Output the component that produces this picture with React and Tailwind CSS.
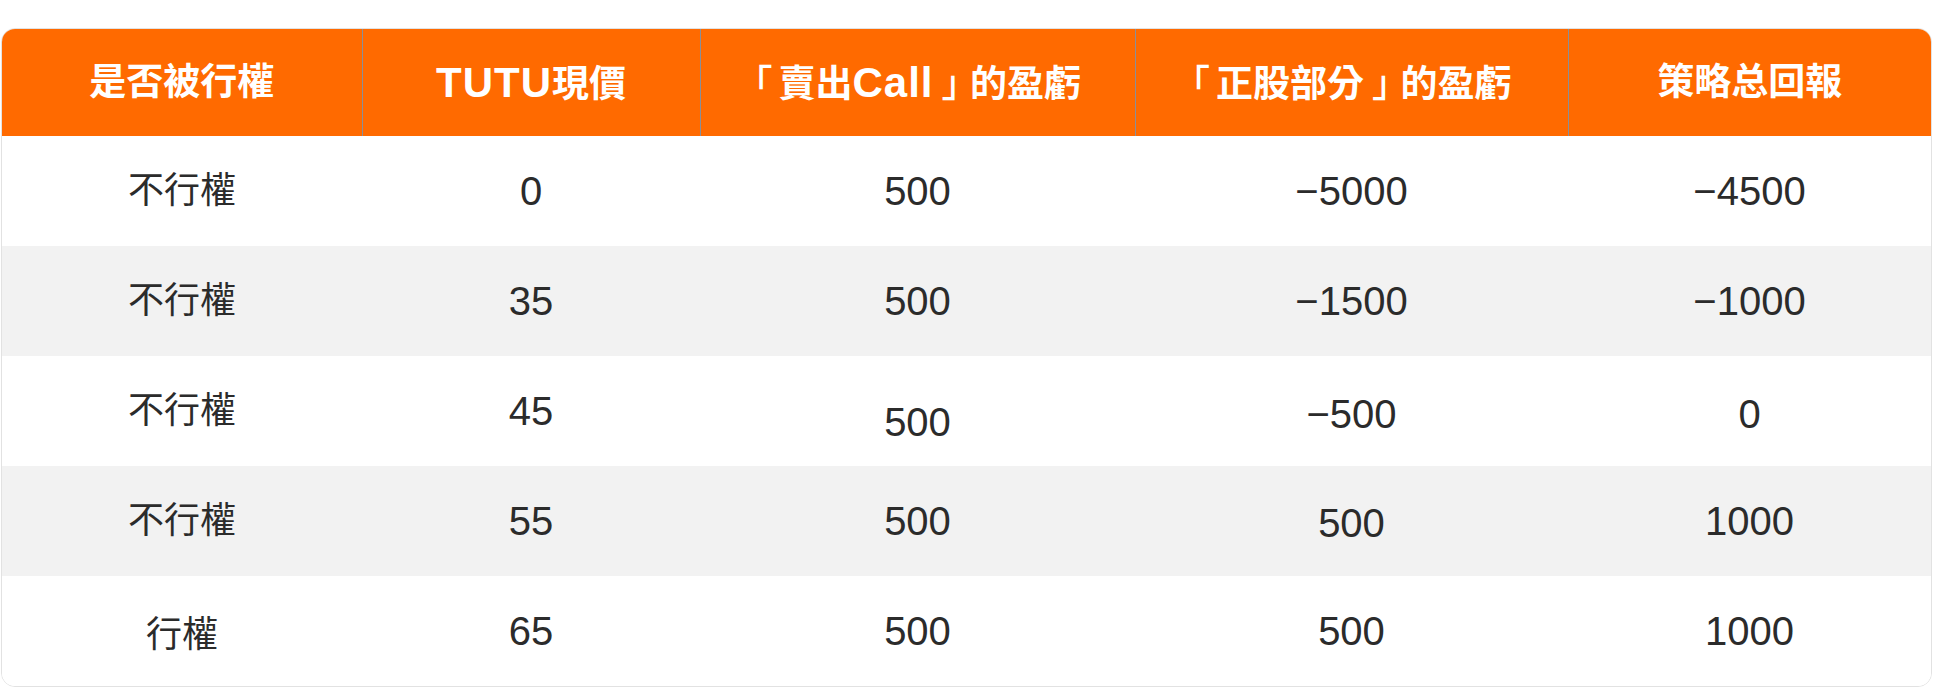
import React from "react"

const font = { fontFamily: '"Liberation Sans", "Noto Sans CJK TC", sans-serif' }

const L = ({ children }) => <span className="text-[42px] tracking-[1px]">{children}</span>
const Open = () => <span className="mr-[6px] font-medium" style={{ fontFamily: '"Noto Sans CJK JP", sans-serif' }}>｢</span>
const Close = () => <span className="ml-[8px] mr-[10px] font-medium" style={{ fontFamily: '"Noto Sans CJK JP", sans-serif' }}>｣</span>

const headers = [
	<>是否被行權</>,
	<><L>TUTU</L>現價</>,
	<><Open />賣出<L>Call</L><Close />的盈虧</>,
	<><Open />正股部分<Close />的盈虧</>,
	<>策略总回報</>,
]

const rows = [
	["不行權", "0", "500", "−5000", "−4500"],
	["不行權", "35", "500", "−1500", "−1000"],
	["不行權", "45", "500", "−500", "0"],
	["不行權", "55", "500", "500", "1000"],
	["行權", "65", "500", "500", "1000"],
]

// small nudges seen in the source picture
const nudge = {
	"2-2": "pt-[22px]",
	"4-0": "pt-[8px]",
	"3-3": "pt-[4px]",
	"2-3": "pt-[6px]",
	"2-4": "pt-[6px]",
}

const App = () => {
	return (
		<div className="pt-[28px] pl-[1px] bg-white min-h-screen" style={font}>
			<div className="w-[1931px] border border-[#e2e2e2] rounded-[14px] overflow-hidden">
				<table className="w-full table-fixed border-collapse">
					<colgroup>
						<col className="w-[360px]" />
						<col className="w-[338px]" />
						<col className="w-[435px]" />
						<col className="w-[433px]" />
						<col className="w-[363px]" />
					</colgroup>
					<thead>
						<tr className="h-[107px] bg-[#ff6a00]">
							{headers.map((h, i) => (
								<th key={i} className={"text-center align-middle text-white font-bold text-[37px] leading-none whitespace-nowrap" + (i > 0 ? " border-l border-[#8a8f99]" : "")}>
									{h}
								</th>
							))}
						</tr>
					</thead>
					<tbody>
						{rows.map((r, ri) => (
							<tr key={ri} className={"h-[110px] " + (ri % 2 === 1 ? "bg-[#f2f2f2]" : "bg-white")}>
								{r.map((c, ci) => (
									<td key={ci} className={"text-center align-middle text-[#2b2b2b] leading-none " + (ci === 0 ? "text-[36px] " : "text-[40px] ") + (nudge[ri + "-" + ci] || "")}>
										{c}
									</td>
								))}
							</tr>
						))}
					</tbody>
				</table>
			</div>
		</div>
	)
}

export default App
